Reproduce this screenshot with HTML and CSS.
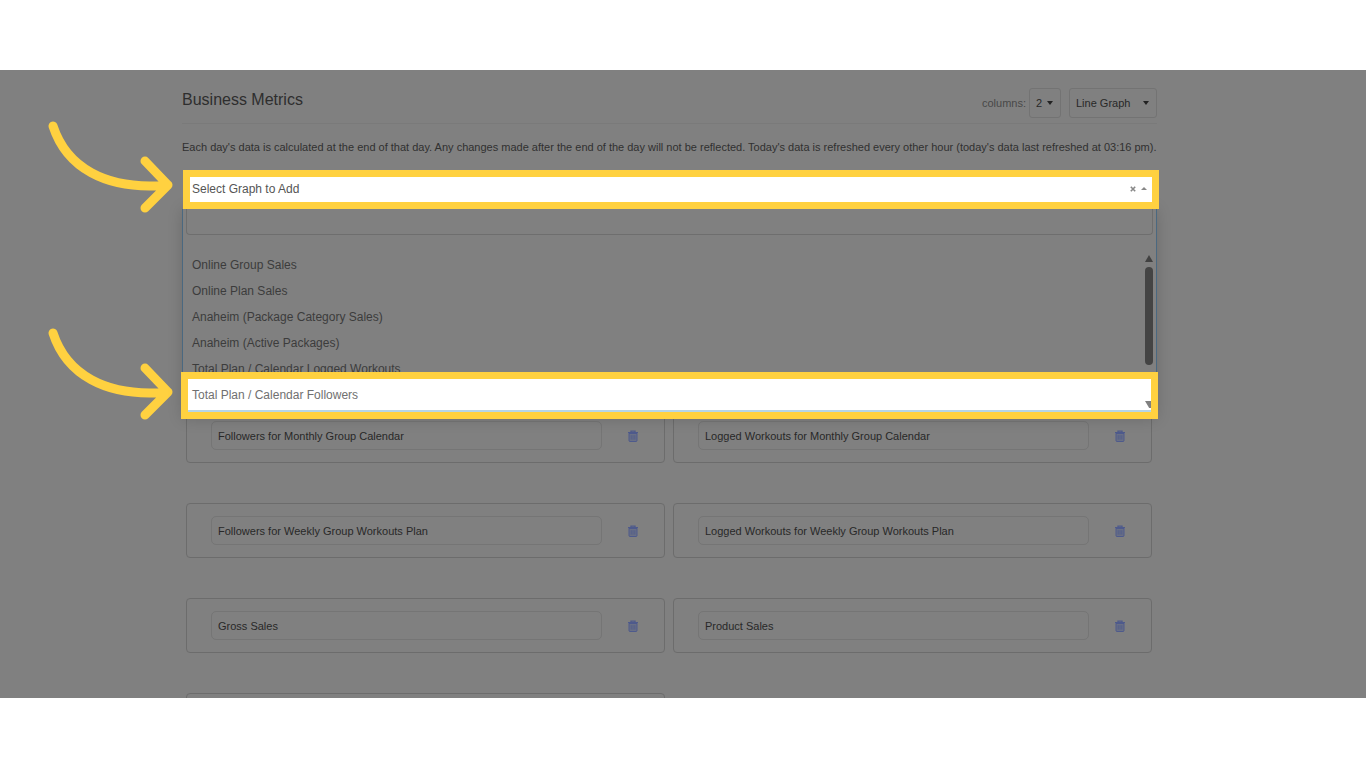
FILE: index.html
```html
<!DOCTYPE html>
<html lang="en">
<head>
<meta charset="utf-8">
<title>Business Metrics</title>
<link rel="stylesheet" href="styles.css">
</head>
<body>
<svg class="symbols" aria-hidden="true">
  <symbol id="trash" viewBox="0 0 12 12">
    <path d="M1 2.7h10M4 2.4V1.1h4v1.3" fill="none" stroke="currentColor" stroke-width="1.3"/>
    <path d="M2 3.5h8v7q0 1-1 1H3q-1 0-1-1z" fill="currentColor" fill-opacity=".45" stroke="currentColor"/>
    <path d="M4.2 5.2v4.4M6 5.2v4.4M7.8 5.2v4.4" stroke="currentColor" stroke-width=".8"/>
  </symbol>
  <symbol id="arrow" viewBox="0 0 130 100">
    <path d="M8 9C21 49 59 74 123 68M100 44l23 24-23 23" fill="none" stroke="#ffd140" stroke-width="9" stroke-linecap="round" stroke-linejoin="round"/>
  </symbol>
</svg>
<main class="stage">
  <svg class="pointer pointer-select" aria-hidden="true"><use href="#arrow"/></svg>
  <svg class="pointer pointer-option" aria-hidden="true"><use href="#arrow"/></svg>

  <header class="header">
    <h1>Business Metrics</h1>
    <div class="controls">
      <label for="columns">columns:</label>
      <span class="picker picker-columns"><select id="columns"><option>2</option></select><i class="caret"></i></span>
      <span class="picker picker-graph"><select aria-label="Graph type"><option>Line Graph</option></select><i class="caret"></i></span>
    </div>
  </header>
  <p class="note">Each day's data is calculated at the end of that day. Any changes made after the end of the day will not be reflected. Today's data is refreshed every other hour (today's data last refreshed at 03:16 pm).</p>

  <section class="combo">
    <div class="combo-box">
      <button class="combo-value" type="button" aria-expanded="true">Select Graph to Add</button>
      <button class="combo-clear" type="button" aria-label="Clear"><svg viewBox="0 0 6 6"><path d="M.8.8l4.4 4.4M5.2.8L.8 5.2" stroke="#888" stroke-width="1.6"/></svg></button>
      <i class="caret caret-up"></i>
    </div>
    <div class="menu">
      <input class="search" type="text" aria-label="Search graphs">
      <ul class="options" role="listbox" aria-label="Graphs">
        <li role="option">Online Group Sales</li>
        <li role="option">Online Plan Sales</li>
        <li role="option">Anaheim (Package Category Sales)</li>
        <li role="option">Anaheim (Active Packages)</li>
        <li role="option">Total Plan / Calendar Logged Workouts</li>
        <li role="option" class="picked"><span>Total Plan / Calendar Followers</span><i class="scroll-down"></i></li>
      </ul>
      <div class="scrollbar" aria-hidden="true"><i class="scroll-up"></i><i class="thumb"></i></div>
    </div>
  </section>

  <section class="cards">
    <div class="card"><input type="text" aria-label="Graph name" value="Followers for Monthly Group Calendar"><button type="button" aria-label="Delete"><svg><use href="#trash"/></svg></button></div>
    <div class="card"><input type="text" aria-label="Graph name" value="Logged Workouts for Monthly Group Calendar"><button type="button" aria-label="Delete"><svg><use href="#trash"/></svg></button></div>
    <div class="card"><input type="text" aria-label="Graph name" value="Followers for Weekly Group Workouts Plan"><button type="button" aria-label="Delete"><svg><use href="#trash"/></svg></button></div>
    <div class="card"><input type="text" aria-label="Graph name" value="Logged Workouts for Weekly Group Workouts Plan"><button type="button" aria-label="Delete"><svg><use href="#trash"/></svg></button></div>
    <div class="card"><input type="text" aria-label="Graph name" value="Gross Sales"><button type="button" aria-label="Delete"><svg><use href="#trash"/></svg></button></div>
    <div class="card"><input type="text" aria-label="Graph name" value="Product Sales"><button type="button" aria-label="Delete"><svg><use href="#trash"/></svg></button></div>
    <div class="card"></div>
  </section>
</main>
</body>
</html>
```
FILE: styles.css
```css
* { box-sizing: border-box; }
body {
  margin: 0;
  height: 100vh;
  padding: 70px 0;
  display: flex;
  background: #fff;
  font: 11px/16px "Liberation Sans", Arial, sans-serif;
  color: #333;
}
.symbols { position: absolute; width: 0; height: 0; }
button, input, select { font: inherit; color: inherit; margin: 0; }
button { border: 0; background: none; padding: 0; }

.stage {
  position: relative;
  flex: 1;
  min-width: 0;
  overflow: hidden;
  padding: 18px 209px 0 182px;
  background: #808080;
}
.pointer { position: absolute; left: 45px; width: 130px; height: 100px; }
.pointer-select { top: 47px; }
.pointer-option { top: 254px; }

.header {
  display: flex;
  justify-content: space-between;
  height: 36px;
  border-bottom: 1px solid #7a7a7a;
}
h1 { margin: 0; font-size: 16px; line-height: 24px; font-weight: 400; color: #2e2e2e; }
.controls { display: flex; gap: 8px; height: 30px; }
.controls label { margin-right: -5px; line-height: 30px; color: #484848; }
.picker { position: relative; display: flex; }
.picker select {
  appearance: none;
  width: 100%;
  padding: 0 6px;
  border: 1px solid #737373;
  border-radius: 3px;
  background: transparent;
  color: #282828;
}
.picker-columns { width: 32px; }
.picker-graph { width: 88px; }
.caret { border: solid transparent; border-width: 4px 3px 0; border-top-color: #222; }
.picker .caret { position: absolute; right: 8px; top: 13px; }
.caret-up { border-width: 0 3px 3px; border-bottom-color: #888; }

.note { margin: 15px 0; height: 16px; white-space: nowrap; color: #303030; }

.combo { position: relative; z-index: 1; }
.combo-box {
  position: relative;
  z-index: 1;
  display: flex;
  align-items: center;
  gap: 5px;
  height: 39px;
  margin: 0 -2px 0 1px;
  padding: 0 5px 2px 2px;
  border: 7px solid #ffd140;
  background: #fff;
}
.combo-value { flex: 1; text-align: left; font-size: 12px; color: #555; }
.combo-clear { display: flex; width: 6px; height: 6px; }
.combo-clear svg { width: 6px; height: 6px; }
.menu {
  position: relative;
  padding: 0 3px;
  border: solid #4a6880;
  border-width: 0 1px;
  background: #808080;
  box-shadow: 0 0 14px rgba(0, 0, 0, .16);
}
.search {
  display: block;
  width: 100%;
  height: 26px;
  border: solid #6e6e6e;
  border-width: 0 1px 1px;
  border-radius: 0 0 4px 4px;
  background: transparent;
}
.options { margin: 0; padding: 17px 0 0; list-style: none; font-size: 12px; line-height: 26px; color: #3c3c3c; }
.options li { height: 26px; padding-left: 6px; }
.options .picked {
  position: relative;
  z-index: 1;
  display: flex;
  justify-content: space-between;
  height: 47px;
  margin: -10px -5px 0;
  padding: 3px 0 0 4px;
  border: 7px solid #ffd140;
  background: linear-gradient(#fff 31px, #b5d5e8 31px);
  color: #707070;
}
.scroll-down { width: 6px; height: 7px; margin-top: 19px; background: #808080; clip-path: polygon(0 0, 100% 0, 100% 100%, 70% 100%); }
.scrollbar { position: absolute; right: 3px; top: 46px; width: 8px; }
.scroll-up { display: block; height: 7px; background: #414141; clip-path: polygon(50% 0, 100% 100%, 0 100%); }
.thumb { display: block; height: 98px; margin-top: 5px; border-radius: 4px; background: #444; }

.cards {
  display: grid;
  grid-template-columns: 1fr 1fr;
  gap: 40px 8px;
  margin: -11px 5px 0 4px;
}
.card {
  display: flex;
  align-items: center;
  height: 55px;
  padding-left: 24px;
  border: 1px solid #6c6c6c;
  border-radius: 4px;
}
.card input {
  flex: 1;
  min-width: 0;
  height: 29px;
  padding: 0 6px;
  border: 1px solid #757575;
  border-radius: 5px;
  background: transparent;
  color: #282828;
}
.card button { display: flex; justify-content: center; width: 62px; color: #4e5a8c; }
.card svg { width: 12px; height: 12px; }
```
